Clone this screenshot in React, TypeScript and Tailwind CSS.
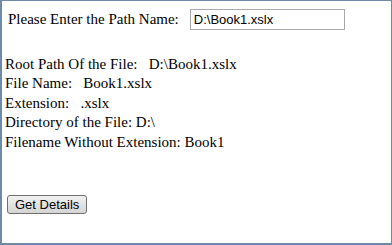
export default function App() {
  return (
    <div
      className="h-[245px] w-[392px] overflow-hidden border-2 border-t border-r border-[#6d8aa8] bg-white text-black"
      style={{ fontFamily: '"Liberation Serif", "Times New Roman", serif' }}
    >
      <div className="flex items-center pl-[6px] pt-[7px] text-[15px]">
        <span className="whitespace-pre">Please Enter the Path Name:</span>
        <input
          type="text"
          defaultValue="D:\Book1.xslx"
          className="ml-[11px] h-[21px] w-[155px] border border-[#a9a9a9] px-[3px] text-[13px] outline-none"
          style={{ fontFamily: '"Liberation Sans", Arial, sans-serif' }}
        />
      </div>
      <div className="mt-[24px] pl-[3px] text-[15px] leading-[19.5px]">
        <div className="whitespace-pre">Root Path Of the File:   D:\Book1.xslx</div>
        <div className="whitespace-pre">File Name:   Book1.xslx</div>
        <div className="whitespace-pre">Extension:   .xslx</div>
        <div className="whitespace-pre">Directory of the File: D:\</div>
        <div className="whitespace-pre">Filename Without Extension: Book1</div>
      </div>
      <div className="mt-[40px] pl-[5px]">
        <button
          type="button"
          className="h-[19px] rounded-[3px] border border-[#707070] bg-gradient-to-b from-[#f2f2f2] to-[#d4d4d4] px-[7px] text-[13px] leading-none"
          style={{ fontFamily: '"Liberation Sans", Arial, sans-serif' }}
        >
          Get Details
        </button>
      </div>
    </div>
  );
}
